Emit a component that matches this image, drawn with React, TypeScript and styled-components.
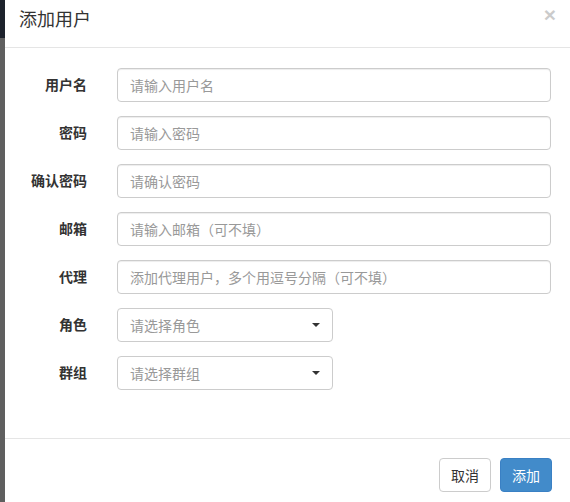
import React from "react";
import styled, { createGlobalStyle } from "styled-components";

const GlobalStyle = createGlobalStyle`
  html, body {
    margin: 0;
    padding: 0;
    background: #ffffff;
    overflow: hidden;
  }
  body {
    font-family: "Noto Sans CJK SC", "Liberation Sans", sans-serif;
    font-size: 14px;
    color: #333333;
  }
`;

type Field = {
  label: string;
  placeholder: string;
  select?: boolean;
};

const fields: Field[] = [
  { label: "用户名", placeholder: "请输入用户名" },
  { label: "密码", placeholder: "请输入密码" },
  { label: "确认密码", placeholder: "请确认密码" },
  { label: "邮箱", placeholder: "请输入邮箱（可不填）" },
  { label: "代理", placeholder: "添加代理用户，多个用逗号分隔（可不填）" },
  { label: "角色", placeholder: "请选择角色", select: true },
  { label: "群组", placeholder: "请选择群组", select: true },
];

const Page = styled.div`
  display: flex;
  width: 570px;
  height: 502px;
  overflow: hidden;
`;

const Backdrop = styled.div`
  display: flex;
  flex-direction: column;
  width: 5px;
  flex-shrink: 0;
`;

const BackdropTop = styled.div`
  height: 38px;
  background: #1d222c;
`;

const BackdropRest = styled.div`
  flex: 1;
  background: #5f5f5f;
`;

const Modal = styled.div`
  flex: 1;
  display: flex;
  flex-direction: column;
  background: #ffffff;
`;

const Header = styled.div`
  display: flex;
  justify-content: space-between;
  align-items: flex-start;
  padding: 5px 14px 16px 14px;
  border-bottom: 1px solid #e5e5e5;
`;

const Title = styled.h4`
  margin: 0;
  font-size: 18px;
  font-weight: 400;
  line-height: 26px;
  color: #333333;
`;

const Close = styled.button`
  border: none;
  background: transparent;
  padding: 0;
  margin-top: -1px;
  font-family: "Liberation Sans", sans-serif;
  font-size: 21px;
  font-weight: 700;
  line-height: 1;
  color: #000000;
  opacity: 0.2;
  cursor: pointer;
`;

const Body = styled.div`
  display: grid;
  grid-template-columns: 82px 1fr;
  column-gap: 30px;
  row-gap: 14px;
  padding: 20px 19px 48px 0;
  border-bottom: 1px solid #e5e5e5;
`;

const Label = styled.label`
  box-sizing: border-box;
  display: flex;
  align-items: center;
  justify-content: flex-end;
  height: 34px;
  padding-bottom: 3px;
  font-weight: 700;
  color: #333333;
`;

const Input = styled.input`
  box-sizing: border-box;
  width: 100%;
  height: 34px;
  padding: 6px 12px;
  border: 1px solid #cccccc;
  border-radius: 4px;
  font-family: inherit;
  font-size: 14px;
  color: #555555;
  box-shadow: inset 0 1px 1px rgba(0, 0, 0, 0.075);
  outline: none;

  &::placeholder {
    color: #999999;
  }
`;

const Select = styled.button`
  box-sizing: border-box;
  display: flex;
  align-items: center;
  justify-content: space-between;
  width: 216px;
  height: 34px;
  padding: 6px 12px;
  border: 1px solid #cccccc;
  border-radius: 4px;
  background: #ffffff;
  font-family: inherit;
  font-size: 14px;
  color: #999999;
  cursor: pointer;
`;

const Caret = styled.span`
  width: 0;
  height: 0;
  border-top: 4px solid #333333;
  border-left: 4px solid transparent;
  border-right: 4px solid transparent;
`;

const Footer = styled.div`
  display: flex;
  justify-content: flex-end;
  gap: 9px;
  padding: 19px 18px 15px 15px;
`;

const Button = styled.button<{ $primary?: boolean }>`
  height: 34px;
  padding: 6px 11px;
  border-radius: 4px;
  border: 1px solid ${(p) => (p.$primary ? "#3a80c4" : "#cccccc")};
  background: ${(p) => (p.$primary ? "#428bca" : "#ffffff")};
  color: ${(p) => (p.$primary ? "#ffffff" : "#333333")};
  font-family: inherit;
  font-size: 14px;
  line-height: 20px;
  cursor: pointer;
`;

const App = () => {
  return (
    <>
      <GlobalStyle />
      <Page>
        <Backdrop>
          <BackdropTop />
          <BackdropRest />
        </Backdrop>
        <Modal>
          <Header>
            <Title>添加用户</Title>
            <Close>×</Close>
          </Header>
          <Body>
            {fields.map((f) => (
              <React.Fragment key={f.label}>
                <Label>{f.label}</Label>
                {f.select ? (
                  <Select type="button">
                    <span>{f.placeholder}</span>
                    <Caret />
                  </Select>
                ) : (
                  <Input placeholder={f.placeholder} />
                )}
              </React.Fragment>
            ))}
          </Body>
          <Footer>
            <Button>取消</Button>
            <Button $primary>添加</Button>
          </Footer>
        </Modal>
      </Page>
    </>
  );
};

export default App;
